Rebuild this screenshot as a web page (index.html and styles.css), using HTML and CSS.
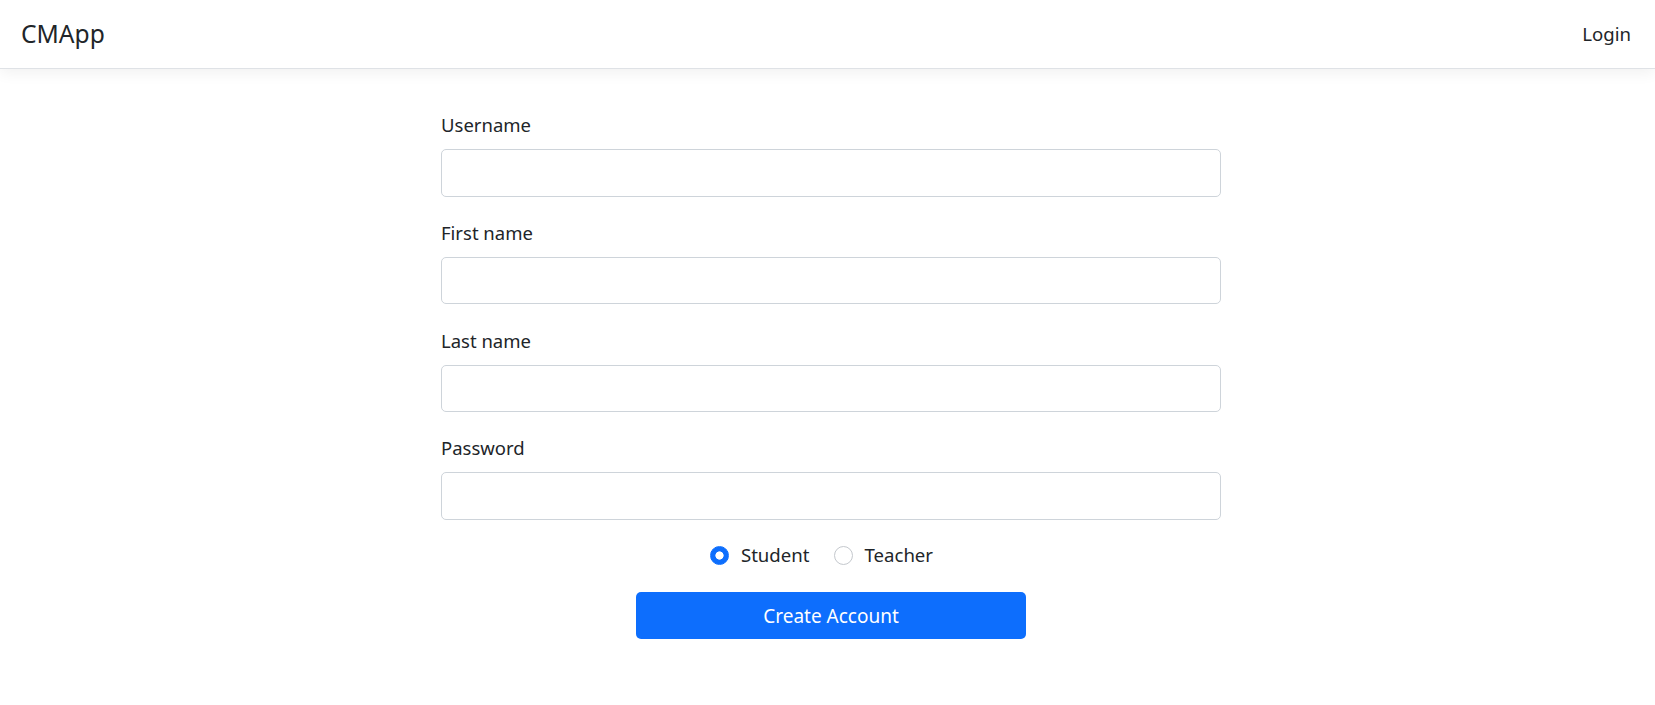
FILE: index.html
```html
<!DOCTYPE html>
<html lang="en">
<head>
<meta charset="utf-8">
<title>CMApp</title>
<link rel="stylesheet" href="styles.css">
</head>
<body>
<header class="navbar">
  <a class="brand" href="#">CMApp</a>
  <a class="nav-link" href="#">Login</a>
</header>
<main class="page">
  <form class="signup">
    <div class="field">
      <label class="field-label" for="username">Username</label>
      <input class="field-input" id="username" type="text">
    </div>
    <div class="field">
      <label class="field-label" for="first">First name</label>
      <input class="field-input" id="first" type="text">
    </div>
    <div class="field">
      <label class="field-label" for="last">Last name</label>
      <input class="field-input" id="last" type="text">
    </div>
    <div class="field">
      <label class="field-label" for="password">Password</label>
      <input class="field-input" id="password" type="password">
    </div>
    <div class="roles">
      <label class="role"><input class="role-radio" type="radio" name="role" checked><span>Student</span></label>
      <label class="role"><input class="role-radio" type="radio" name="role"><span>Teacher</span></label>
    </div>
    <div class="actions">
      <button class="btn-primary" type="button">Create Account</button>
    </div>
  </form>
</main>
</body>
</html>
```

FILE: styles.css
```css
* { box-sizing: border-box; }

html, body {
  margin: 0;
  padding: 0;
  background: #fff;
  color: #212529;
  font-family: "Noto Sans", "Open Sans", "Liberation Sans", sans-serif;
}

.navbar {
  height: 69px;
  display: flex;
  align-items: center;
  justify-content: space-between;
  padding: 0 24px 0 21px;
  background: #fff;
  border-bottom: 1px solid #dfe2e6;
  box-shadow: 0 4px 14px rgba(0, 0, 0, 0.06);
  position: relative;
}

.brand {
  font-size: 24.6px;
  line-height: 1;
  color: #212529;
  text-decoration: none;
}

.nav-link {
  font-size: 18.6px;
  line-height: 1;
  color: #212529;
  text-decoration: none;
}

.page {
  display: flex;
  justify-content: center;
  padding: 42px 0 0 7px;
}

.signup {
  width: 780px;
  display: flex;
  flex-direction: column;
}

.field {
  display: flex;
  flex-direction: column;
  margin-bottom: 22.3px;
}

.field-label {
  font-size: 18.5px;
  line-height: 27px;
  margin-bottom: 11px;
}

.field-input {
  height: 47.5px;
  width: 100%;
  border: 1px solid #ced4da;
  border-radius: 5px;
  padding: 6px 15px;
  font-size: 18px;
  font-family: inherit;
  background: #fff;
}

.roles {
  display: flex;
  justify-content: center;
  height: 30px;
  align-items: center;
  margin-top: -2px;
  margin-bottom: 22px;
}

.role {
  display: inline-flex;
  align-items: center;
  gap: 12px;
  margin-right: 24px;
  font-size: 18.6px;
  line-height: 30px;
}

.role:last-child {
  margin-right: 19px;
}

.role-radio {
  appearance: none;
  -webkit-appearance: none;
  margin: 0;
  width: 19px;
  height: 19px;
  border: 1px solid #c4c8cd;
  border-radius: 50%;
  background: #fff;
}

.role-radio:checked {
  border-color: #0d6efd;
  background: radial-gradient(circle, #fff 0 3.8px, #0d6efd 4.4px);
}

.actions {
  display: flex;
  justify-content: center;
}

.btn-primary {
  width: 390px;
  height: 47px;
  border: none;
  border-radius: 5px;
  background: #0d6efd;
  color: #fff;
  font-family: inherit;
  font-size: 19px;
}
```
